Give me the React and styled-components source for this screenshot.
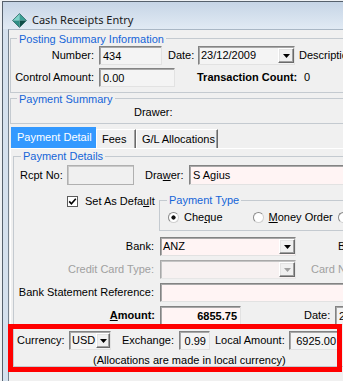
import React from "react";
import styled, { createGlobalStyle } from "styled-components";

const GlobalStyle = createGlobalStyle`
  html, body {
    margin: 0;
    padding: 0;
    background: #eef1f4;
  }
  body {
    font-family: "Liberation Sans", Arial, sans-serif;
    font-size: 11px;
    color: #000;
  }
  * {
    box-sizing: border-box;
  }
`;

const Screen = styled.div`
  position: relative;
  width: 343px;
  height: 381px;
  overflow: hidden;
  padding: 1px 0 0 2px;
  background: #eef1f4;
`;

const Window = styled.div`
  height: 100%;
  display: flex;
  flex-direction: column;
  border-left: 1px solid #56616d;
  border-top: 1px solid #56616d;
  background: #d5e1ee;
  overflow: hidden;
`;

const TitleBar = styled.div`
  flex: none;
  height: 27px;
  display: flex;
  align-items: flex-start;
  gap: 5px;
  padding: 11px 0 0 9px;
  background: linear-gradient(#c6d5e6, #e1eaf4);
`;

const TitleText = styled.span`
  font-family: "Noto Sans", "Liberation Sans", sans-serif;
  font-size: 11px;
  line-height: 15px;
  color: #1b1b1b;
  margin-top: -1px;
`;

const Client = styled.div`
  flex: 1;
  margin-left: 5px;
  border-left: 1px solid #76828e;
  border-top: 1px solid #a9b7c5;
  background: #f0f0f0;
  overflow: hidden;
`;

const Group = styled.fieldset`
  flex: none;
  width: ${(p) => p.$w || 440}px;
  min-width: 0;
  margin: ${(p) => p.$margin || "0"};
  padding: ${(p) => p.$pad || "0"};
  border: 1px solid #c4cad0;
`;

const Caption = styled.legend`
  margin-left: ${(p) => p.$indent || 6}px;
  padding: ${(p) => (p.$drop ? "3px 2px 0" : "0 2px")};
  line-height: 13px;
  color: #1565d8;
`;

const Row = styled.div`
  display: flex;
  align-items: center;
  flex: none;
  height: ${(p) => p.$h || 19}px;
  margin-top: ${(p) => p.$mt || 0}px;
  padding-left: ${(p) => p.$pl || 0}px;
  white-space: nowrap;
`;

const Label = styled.span`
  flex: none;
  width: ${(p) => (p.$w ? `${p.$w}px` : "auto")};
  margin-left: ${(p) => p.$ml || 0}px;
  text-align: ${(p) => p.$align || "left"};
  font-weight: ${(p) => (p.$bold ? 700 : 400)};
  color: ${(p) => (p.$dim ? "#a0a0a0" : "#000")};
  line-height: 13px;
`;

const fieldBg = {
  gray: "#f4f4f4",
  pink: "#fff4f4",
  disabled: "#f0f0f0",
  pinkDim: "#f7f1f1",
};

const Field = styled.div`
  flex: none;
  display: flex;
  align-items: center;
  justify-content: ${(p) => (p.$right ? "flex-end" : "flex-start")};
  width: ${(p) => p.$w}px;
  height: 100%;
  margin-left: ${(p) => p.$ml || 0}px;
  padding: 0 3px;
  background: ${(p) => fieldBg[p.$bg || "gray"]};
  font-weight: ${(p) => (p.$bold ? 700 : 400)};
  border: 1px solid;
  border-color: ${(p) =>
    p.$bg === "disabled"
      ? "#b0b0b0"
      : "#838383 #e2e2e2 #e2e2e2 #838383"};
  box-shadow: ${(p) =>
    p.$bg === "disabled" ? "inset 1px 1px 0 #c9c9c9" : "inset 1px 1px 0 #a8a8a8"};
`;

const Combo = styled.div`
  flex: none;
  display: flex;
  align-items: stretch;
  width: ${(p) => p.$w}px;
  height: 100%;
  margin-left: ${(p) => p.$ml || 0}px;
  padding: 1px 0 1px 1px;
  background: ${(p) => fieldBg[p.$bg || "gray"]};
  border: 1px solid;
  border-color: ${(p) =>
    p.$dim ? "#a8a8a8 #e6e6e6 #e6e6e6 #a8a8a8" : "#838383 #e2e2e2 #e2e2e2 #838383"};
  box-shadow: inset 1px 1px 0 ${(p) => (p.$dim ? "#c4c4c4" : "#a8a8a8")};
`;

const ComboText = styled.span`
  flex: 1;
  display: flex;
  align-items: center;
  padding-left: 1px;
  line-height: 13px;
`;

const DropButton = styled.span`
  flex: none;
  width: ${(p) => p.$w || 16}px;
  display: flex;
  align-items: center;
  justify-content: center;
  background: #f0f0f0;
  border: 1px solid;
  border-color: #ffffff #6a6a6a #6a6a6a #ffffff;
  box-shadow: inset -1px -1px 0 #a0a0a0, inset 1px 1px 0 #e3e3e3;
`;

const TabStrip = styled.div`
  display: flex;
  align-items: flex-end;
  height: 21px;
  margin: 3px 0 0 1px;
  padding-left: 1px;
`;

const Tab = styled.div`
  flex: none;
  width: ${(p) => p.$w}px;
  height: ${(p) => (p.$active ? 21 : 19)}px;
  padding: 3px 0 0 5px;
  line-height: 13px;
  white-space: nowrap;
  background: ${(p) => (p.$active ? "#3399ff" : "#f0f0f0")};
  color: ${(p) => (p.$active ? "#fff" : "#000")};
  border-top: 1px solid ${(p) => (p.$active ? "#3399ff" : "#fff")};
  border-left: 1px solid ${(p) => (p.$active ? "#3399ff" : "#fff")};
  border-right: 1px solid ${(p) => (p.$active ? "#3399ff" : "#6a6a6a")};
  box-shadow: ${(p) => (p.$active ? "none" : "inset -1px 0 0 #a0a0a0")};
`;

const TabPanel = styled.div`
  margin-left: 1px;
  border-top: 1px solid #fff;
  border-left: 1px solid #fff;
  background: #f0f0f0;
`;

const OptionsRow = styled.div`
  display: flex;
  align-items: flex-start;
  margin-top: 9px;
`;

const CheckArea = styled.label`
  flex: none;
  display: flex;
  align-items: center;
  gap: 7px;
  width: 145px;
  height: 13px;
  margin-top: 1px;
  padding-left: 53px;
  line-height: 13px;
  white-space: nowrap;
`;

const CheckBox = styled.span`
  flex: none;
  width: 11px;
  height: 11px;
  display: flex;
  align-items: center;
  justify-content: center;
  background: #fff;
  border: 1px solid #5b5b5b;
`;

const RadioRow = styled.div`
  display: flex;
  align-items: center;
  height: 13px;
  white-space: nowrap;
`;

const RadioOption = styled.span`
  flex: none;
  display: flex;
  align-items: center;
  gap: 5px;
  margin-left: ${(p) => p.$ml || 0}px;
  line-height: 13px;
`;

const RadioDot = styled.span`
  flex: none;
  width: 11px;
  height: 11px;
  border-radius: 50%;
  border: 1px solid;
  border-color: #8a8a8a #d0d0d0 #d0d0d0 #8a8a8a;
  background: ${(p) =>
    p.$on
      ? "radial-gradient(circle, #111 0 1.8px, #fff 2.4px)"
      : "#fff"};
`;

const Note = styled(Row)`
  color: #000;
`;

const Annotation = styled.div`
  position: absolute;
  left: 8px;
  top: 324px;
  width: 334px;
  height: 48px;
  border: 5px solid #ff0000;
  pointer-events: none;
`;

const AppIcon = () => (
  <svg width="15" height="15" viewBox="0 0 16 16">
    <polygon points="8,0.6 0.6,8 8,8" fill="#7fd3ca" />
    <polygon points="8,0.6 15.4,8 8,8" fill="#3a9f95" />
    <polygon points="15.4,8 8,15.4 8,8" fill="#0f4c47" />
    <polygon points="8,15.4 0.6,8 8,8" fill="#2e8f86" />
    <polygon
      points="8,0.6 15.4,8 8,15.4 0.6,8"
      fill="none"
      stroke="#1d5e58"
      strokeWidth="0.8"
    />
  </svg>
);

const Arrow = ({ dim }) => (
  <svg width="7" height="4" viewBox="0 0 7 4">
    <polygon points="0,0 7,0 3.5,4" fill={dim ? "#a0a0a0" : "#000"} />
  </svg>
);

const Check = () => (
  <svg width="9" height="9" viewBox="0 0 9 9">
    <path d="M1.2 4.4 L3.4 6.8 L7.8 1.8" fill="none" stroke="#000" strokeWidth="1.6" />
  </svg>
);

const App = () => {
  return (
    <>
      <GlobalStyle />
      <Screen>
        <Window>
          <TitleBar>
            <AppIcon />
            <TitleText>Cash Receipts Entry</TitleText>
          </TitleBar>
          <Client>
            <Group $margin="0 0 0 1px" $pad="0 0 5px">
              <Caption $drop>Posting Summary Information</Caption>
              <Row>
                <Label $w={83} $align="right">Number:</Label>
                <Field $ml={5} $w={63}>434</Field>
                <Label $ml={6} $w={27}>Date:</Label>
                <Combo $ml={3} $w={97}>
                  <ComboText>23/12/2009</ComboText>
                  <DropButton>
                    <Arrow />
                  </DropButton>
                </Combo>
                <Label $ml={4}>Description:</Label>
              </Row>
              <Row $mt={3}>
                <Label $w={83} $align="right">Control Amount:</Label>
                <Field $ml={5} $w={76}>0.00</Field>
                <Label $ml={22} $w={105} $bold>
                  Transaction Count:
                </Label>
                <Label $ml={2}>0</Label>
              </Row>
            </Group>

            <Group $margin="-3px 0 0 1px" $pad="0 0 4px">
              <Caption $drop>Payment Summary</Caption>
              <Row $h={13} $pl={123}>
                <Label>Drawer:</Label>
              </Row>
            </Group>

            <TabStrip>
              <Tab $w={85} $active>
                Payment Detail
              </Tab>
              <Tab $w={40}>Fees</Tab>
              <Tab $w={82}>G/L Allocations</Tab>
            </TabStrip>

            <TabPanel>
              <Group $margin="1px 0 0 2px" $w={420}>
                <Caption $indent={7}>Payment Details</Caption>

                <Row $h={20} $mt={2} $pl={6}>
                  <Label $w={47}>Rcpt No:</Label>
                  <Field $w={67} $bg="disabled" />
                  <Label $ml={11} $w={44}>
                    Dra<u>w</u>er:
                  </Label>
                  <Field $w={200} $bg="pink">
                    S Agius
                  </Field>
                </Row>

                <OptionsRow>
                  <CheckArea>
                    <CheckBox>
                      <Check />
                    </CheckBox>
                    <span>
                      Set As Defa<u>u</u>lt
                    </span>
                  </CheckArea>
                  <Group $w={220} $pad="4px 0 6px">
                    <Caption $indent={7}>Payment Type</Caption>
                    <RadioRow>
                      <RadioOption $ml={8}>
                        <RadioDot $on />
                        <span>
                          Che<u>q</u>ue
                        </span>
                      </RadioOption>
                      <RadioOption $ml={30}>
                        <RadioDot />
                        <span>
                          <u>M</u>oney Order
                        </span>
                      </RadioOption>
                      <RadioOption $ml={5}>
                        <RadioDot />
                        <span>Credit Card</span>
                      </RadioOption>
                    </RadioRow>
                  </Group>
                </OptionsRow>

                <Row $mt={6}>
                  <Label $w={140} $align="right">Bank:</Label>
                  <Combo $ml={6} $w={136} $bg="pink">
                    <ComboText>ANZ</ComboText>
                    <DropButton>
                      <Arrow />
                    </DropButton>
                  </Combo>
                  <Label $ml={42}>Branch:</Label>
                </Row>

                <Row $mt={4}>
                  <Label $w={140} $align="right" $dim>
                    Credit Card Type:
                  </Label>
                  <Combo $ml={6} $w={136} $bg="pinkDim" $dim>
                    <ComboText />
                    <DropButton>
                      <Arrow dim />
                    </DropButton>
                  </Combo>
                  <Label $ml={15} $dim>
                    Card No:
                  </Label>
                </Row>

                <Row $mt={4}>
                  <Label $w={140} $align="right">
                    Bank Statement Reference:
                  </Label>
                  <Field $ml={6} $w={220} $bg="pink" />
                </Row>

                <Row $mt={4}>
                  <Label $w={141} $align="right" $bold>
                    <u>A</u>mount:
                  </Label>
                  <Field $ml={5} $w={81} $bg="pink" $bold $right>
                    6855.75
                  </Field>
                  <Label $ml={63} $w={31}>Date:</Label>
                  <Field $w={80}>23/12/2009</Field>
                </Row>

                <Row $mt={6} $pl={3}>
                  <Label $w={52}>Currency:</Label>
                  <Combo $w={42}>
                    <ComboText>USD</ComboText>
                    <DropButton $w={14}>
                      <Arrow />
                    </DropButton>
                  </Combo>
                  <Label $ml={11} $w={57}>Exchange:</Label>
                  <Field $w={31} $right>
                    0.99
                  </Field>
                  <Label $ml={5} $w={74}>Local Amount:</Label>
                  <Field $w={51} $right>
                    6925.00
                  </Field>
                </Row>

                <Note $h={13} $mt={3} $pl={79}>
                  (Allocations are made in local currency)
                </Note>
              </Group>
            </TabPanel>
          </Client>
        </Window>
        <Annotation />
      </Screen>
    </>
  );
};

export default App;
